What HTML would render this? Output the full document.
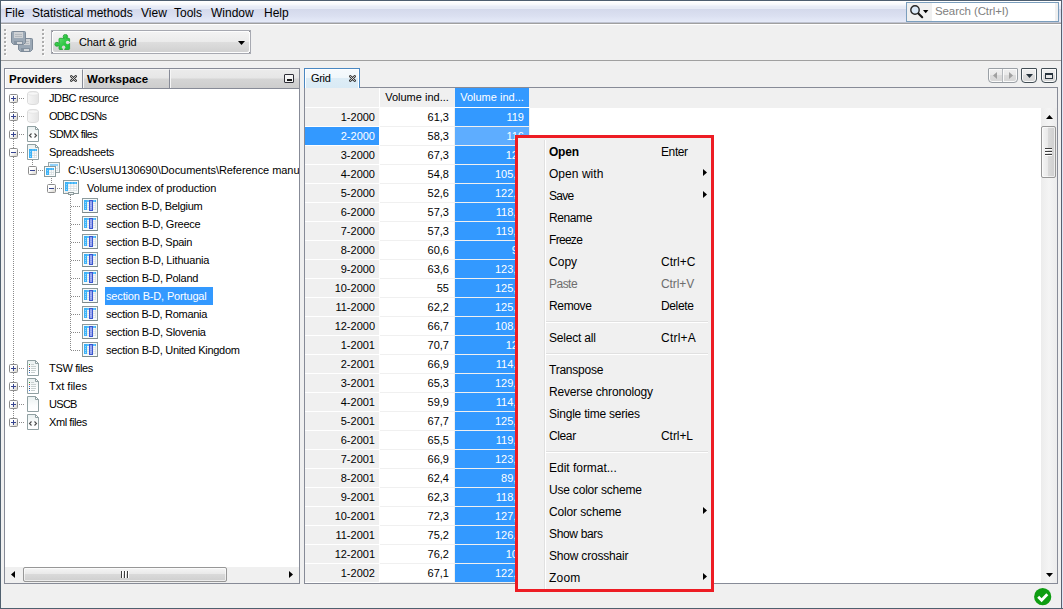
<!DOCTYPE html>
<html><head><meta charset="utf-8"><title>Chart &amp; grid</title>
<style>
*{box-sizing:border-box;margin:0;padding:0}
html,body{width:1063px;height:609px;overflow:hidden;background:#f0f0f0}
body{position:relative;font-family:"Liberation Sans",sans-serif;font-size:11px;color:#000}
.a{position:absolute}
.t{position:absolute;white-space:nowrap;line-height:1}
#frame-t{left:0;top:0;width:1063px;height:1px;background:#4e5e70}
#frame-l{left:0;top:0;width:1px;height:609px;background:#50606f}
#frame-l2{left:1px;top:1px;width:1px;height:607px;background:#8f9aa8}
#frame-r{left:1061px;top:0;width:1px;height:609px;background:#586070}
#frame-r2{left:1062px;top:0;width:1px;height:609px;background:#dfe4f3}
#frame-b{left:0;top:608px;width:1063px;height:1px;background:#50606f}
#frame-b2{display:none}
#menubar{left:1px;top:1px;width:1060px;height:22px;background:linear-gradient(#ffffff 0px,#ffffff 1px,#fdfdfe 1px,#fdfdfe 2px,#fafbfd 2px,#fafbfd 3px,#f7f8fc 3px,#f7f8fc 4px,#eff2fa 4px,#eff2fa 5px,#e9edf7 5px,#e9edf7 6px,#e7ebf6 6px,#e7ebf6 7px,#e7ebf6 7px,#e7ebf6 8px,#d4d9ec 8px,#d6dbed 10px,#dbe0f1 15px,#e2e7f6 19px,#e2e7f6 20px,#e4e9f7 20px,#e4e9f7 21px,#bfc3d1 21px,#bfc3d1 22px)}
#menuline{left:1px;top:23px;width:1060px;height:2px;background:linear-gradient(#a0a0a0 1px,#fff 1px)}
.m{font-size:12px;top:7px;color:#000}
#search{left:906px;top:2px;width:153px;height:20px;border:1px solid #7b9ebd;background:#fff}
#search .ic{left:0;top:0;width:25px;height:18px;background:#f0f0f0}
#search .rt{left:148px;top:0;width:3px;height:18px;background:#f0f0f0}
#tbline{left:1px;top:60px;width:1060px;height:1px;background:#a0a0a0}
#tbline2{left:1px;top:61px;width:1060px;height:1px;background:#fbfbfb}

#combo{left:51px;top:30px;width:200px;height:24px;border:1px solid #a7a9b1;background:#fdfdfd}
#combo .fill{left:1px;top:1px;width:196px;height:20px;border-radius:2px;background:linear-gradient(#f3f3f3 0,#ebebeb 10px,#dedede 10px,#d1d1d1 20px)}
#combo .cd{width:1px;height:1px;background:#8c8c90}
.panel{border:1px solid #8b8f96;background:#fff}
.tab{height:20px;border-right:1px solid #8b8f96}
.row{left:0;width:292px;height:18px}
.lbl{position:absolute;top:0;height:18px;line-height:18px;white-space:nowrap;padding:0 8px 0 1px;font-size:11px;letter-spacing:-0.25px}
.exp{position:absolute;width:9px;height:9px;border:1px solid #8c8c8c;border-radius:1.5px;background:linear-gradient(135deg,#fff 0,#fff 40%,#d6d3cb 100%)}
.exp:before{content:"";position:absolute;left:1px;top:3px;width:5px;height:1px;background:#36448f}
.exp.plus:after{content:"";position:absolute;left:3px;top:1px;width:1px;height:5px;background:#36448f}
.hd{border-top:0}
.vd{position:absolute;width:1px;background-image:linear-gradient(#8a8a8a 0,#8a8a8a 1px,transparent 1px);background-size:1px 2px}
.hdts{position:absolute;height:1px;background-image:linear-gradient(90deg,#8a8a8a 0,#8a8a8a 1px,transparent 1px);background-size:2px 1px}
.gc{position:absolute;height:18px;line-height:18px;font-size:11px;text-align:right;white-space:nowrap;overflow:hidden}
.mi{position:absolute;left:549px;letter-spacing:-0.15px;font-size:12px;line-height:22px;height:22px;white-space:nowrap}
.acc{position:absolute;left:661px;letter-spacing:-0.15px;font-size:12px;line-height:22px;height:22px;white-space:nowrap}
.arr{position:absolute;left:703px;width:0;height:0;border-left:4px solid #000;border-top:4px solid transparent;border-bottom:4px solid transparent}
.sep{position:absolute;left:546px;width:162px;height:2px;border-top:1px solid #e0e0e0;border-bottom:1px solid #fff}
</style></head><body>

<div class="a" id="menubar"></div><div class="a" id="menuline"></div>
<div class="t m" style="left:5px">File</div>
<div class="t m" style="left:32px">Statistical methods</div>
<div class="t m" style="left:141px">View</div>
<div class="t m" style="left:174px">Tools</div>
<div class="t m" style="left:211px">Window</div>
<div class="t m" style="left:264px">Help</div>
<div class="a" id="search"><div class="a ic"></div><div class="a rt"></div><svg class="a" style="left:2px;top:1px" width="22" height="16" viewBox="0 0 22 16"><circle cx="6" cy="6" r="4.200" fill="#dbe9f7" stroke="#262626" stroke-width="1.400"/><path d="M9.400 9.400 L13.200 13.200" stroke="#1a1a1a" stroke-width="2.100" stroke-linecap="round"/><path d="M14 6 h5.400 l-2.700 3.200z" fill="#000"/></svg><div class="t" style="left:28px;top:3px;font-size:11.500px;letter-spacing:-0.1px;color:#7f7f7f">Search (Ctrl+I)</div></div>
<div class="a" id="tbline"></div>
<svg class="a" style="left:4px;top:29px" width="3" height="28" viewBox="0 0 3 28"><rect x="1" y="1" width="2" height="2" fill="#fbfbfb"/><rect x="0" y="0" width="2" height="2" fill="#acacac"/><rect x="1" y="5" width="2" height="2" fill="#fbfbfb"/><rect x="0" y="4" width="2" height="2" fill="#acacac"/><rect x="1" y="9" width="2" height="2" fill="#fbfbfb"/><rect x="0" y="8" width="2" height="2" fill="#acacac"/><rect x="1" y="13" width="2" height="2" fill="#fbfbfb"/><rect x="0" y="12" width="2" height="2" fill="#acacac"/><rect x="1" y="17" width="2" height="2" fill="#fbfbfb"/><rect x="0" y="16" width="2" height="2" fill="#acacac"/><rect x="1" y="21" width="2" height="2" fill="#fbfbfb"/><rect x="0" y="20" width="2" height="2" fill="#acacac"/><rect x="1" y="25" width="2" height="2" fill="#fbfbfb"/><rect x="0" y="24" width="2" height="2" fill="#acacac"/></svg>
<svg class="a" style="left:42px;top:29px" width="3" height="28" viewBox="0 0 3 28"><rect x="1" y="1" width="2" height="2" fill="#fbfbfb"/><rect x="0" y="0" width="2" height="2" fill="#acacac"/><rect x="1" y="5" width="2" height="2" fill="#fbfbfb"/><rect x="0" y="4" width="2" height="2" fill="#acacac"/><rect x="1" y="9" width="2" height="2" fill="#fbfbfb"/><rect x="0" y="8" width="2" height="2" fill="#acacac"/><rect x="1" y="13" width="2" height="2" fill="#fbfbfb"/><rect x="0" y="12" width="2" height="2" fill="#acacac"/><rect x="1" y="17" width="2" height="2" fill="#fbfbfb"/><rect x="0" y="16" width="2" height="2" fill="#acacac"/><rect x="1" y="21" width="2" height="2" fill="#fbfbfb"/><rect x="0" y="20" width="2" height="2" fill="#acacac"/><rect x="1" y="25" width="2" height="2" fill="#fbfbfb"/><rect x="0" y="24" width="2" height="2" fill="#acacac"/></svg>
<svg class="a" style="left:11px;top:31px" width="22" height="21" viewBox="0 0 22 21"><g transform="translate(7,7)"><path d="M1.500 .5 H13.500 Q14.500 .5 14.500 1.500 V11.500 L12.500 13.500 H2.500 L.5 11.500 V1.500 Q.5 .5 1.500 .5Z" fill="#9ba8b5" stroke="#7d8a98"/><rect x="3" y="1" width="9" height="6" fill="#cfd2d5"/><path d="M4 3.500h7M4 5.500h7" stroke="#b4b9be"/><rect x="3" y="10" width="9" height="3" fill="#8593a1"/><rect x="6" y="11" width="5" height="2" fill="#d4d7da"/></g><g><path d="M1.500 .5 H13.500 Q14.500 .5 14.500 1.500 V11.500 L12.500 13.500 H2.500 L.5 11.500 V1.500 Q.5 .5 1.500 .5Z" fill="#9ba8b5" stroke="#7d8a98"/><rect x="3" y="1" width="9" height="6" fill="#cfd2d5"/><path d="M4 3.500h7M4 5.500h7" stroke="#b4b9be"/><rect x="3" y="10" width="9" height="3" fill="#8593a1"/><rect x="6" y="11" width="5" height="2" fill="#d4d7da"/></g></svg>
<div class="a" id="combo"><div class="a fill"></div><div class="a cd" style="left:0;top:0"></div><div class="a cd" style="left:197px;top:0"></div><div class="a cd" style="left:0;top:21px"></div><div class="a cd" style="left:197px;top:21px"></div><svg class="a" style="left:2px;top:3px" width="17" height="17" viewBox="0 0 17 17"><defs><linearGradient id="gpz" x1="0" y1="0" x2="1" y2="1"><stop offset="0" stop-color="#5ddc6c"/><stop offset=".5" stop-color="#2fc744"/><stop offset="1" stop-color="#1fc038"/></linearGradient><mask id="mpz"><rect width="17" height="17" fill="#fff"/><circle cx="13.600" cy="8.500" r="1.700" fill="#000"/><rect x="14.500" y="7.800" width="3" height="1.400" fill="#000"/><circle cx="9.600" cy="13.200" r="1.700" fill="#000"/><rect x="8.900" y="14" width="1.400" height="3" fill="#000"/></mask></defs><g mask="url(#mpz)" fill="url(#gpz)" stroke="#1f9e30" stroke-width=".8"><circle cx="11.400" cy="2.600" r="2.200"/><circle cx="2.900" cy="10.300" r="2"/><rect x="5" y="4.300" width="10.600" height="11.200" rx=".8"/></g><g mask="url(#mpz)" fill="#35ca49"><rect x="10.400" y="3.500" width="2" height="2.500"/><rect x="3.500" y="9.400" width="3" height="1.900"/></g></svg><div class="t" style="left:27px;top:6px;font-size:11px;letter-spacing:-0.1px">Chart &amp; grid</div><svg class="a" style="left:186px;top:10px" width="7" height="4" viewBox="0 0 7 4"><path d="M0 0 H7 L3.500 4Z" fill="#000"/></svg></div>
<div class="a" style="left:4px;top:68px;width:296px;height:516px;border:1px solid #878b97;background:#fff"></div>
<div class="a" style="left:5px;top:69px;width:294px;height:19px;background:linear-gradient(#ececec 0,#e6e6e6 9px,#d5d5d5 10px,#cdcdcd 19px)"></div>
<div class="a" style="left:5px;top:69px;width:78px;height:19px;background:#f3f3f3;border:1px solid #fff;border-right:1px solid #878b97;border-bottom:0"></div>
<div class="a" style="left:83px;top:69px;width:87px;height:19px;border-left:1px solid #f6f6f6;border-top:1px solid #f4f4f4;border-right:1px solid #878b97"></div>
<div class="a" style="left:170px;top:69px;width:129px;height:19px;border-left:1px solid #f6f6f6;border-top:1px solid #f4f4f4"></div>
<div class="a" style="left:5px;top:88px;width:294px;height:1px;background:#878b97"></div>
<div class="t" style="left:9px;top:74px;font-size:11.5px;font-weight:bold">Providers</div>
<div class="t" style="left:87px;top:74px;font-size:11.5px;font-weight:bold">Workspace</div>
<svg class="a" style="left:70px;top:75px" width="7" height="7" viewBox="0 0 7 7"><path d="M1.300 1.300 L5.700 5.700 M5.700 1.300 L1.300 5.700" stroke="#3a3a3a" stroke-width="2.500" stroke-linecap="round"/><path d="M1.400 1.400 L5.600 5.600 M5.600 1.400 L1.400 5.600" stroke="#e0e0e0" stroke-width=".9" stroke-linecap="round"/></svg>
<div class="a" style="left:284px;top:74px;width:10px;height:9px;border:1px solid #2e2e36;border-radius:1px;background:#f4f4f4"><div class="a" style="left:2px;top:4px;width:5px;height:2px;background:#1a1a1a"></div></div>
<div class="a" style="left:6px;top:89px;width:293px;height:476px;overflow:hidden">
<div class="vd" style="left:7px;top:14px;height:316px"></div>
<div class="vd" style="left:26px;top:71px;height:6px"></div>
<div class="vd" style="left:45px;top:89px;height:6px"></div>
<div class="vd" style="left:64px;top:106px;height:156px"></div>
<div class="a row" style="top:0px">
<div class="exp plus" style="left:3px;top:5px"></div><div class="hdts" style="left:13px;top:9px;width:6px"></div>
<div class="a" style="left:21px;top:2px;line-height:0"><svg width="12" height="14" viewBox="0 0 12 14"><defs><linearGradient id="gdb" x1="0" x2="1"><stop offset="0" stop-color="#f6f6f6"/><stop offset="1" stop-color="#e4e4e4"/></linearGradient></defs><path d="M.5 2.500 C.5 -.2 11.500 -.2 11.500 2.500 V11.500 C11.500 14.200 .5 14.200 .5 11.500 Z" fill="url(#gdb)" stroke="#dcdcdc"/><ellipse cx="6" cy="2.600" rx="5" ry="1.700" fill="#f7f7f7" stroke="#e3e3e3" stroke-width=".7"/></svg></div>
<div class="lbl" style="left:42px;letter-spacing:0;"><span style="letter-spacing:-0.40px">JDBC resource</span></div></div>
<div class="a row" style="top:18px">
<div class="exp plus" style="left:3px;top:5px"></div><div class="hdts" style="left:13px;top:9px;width:6px"></div>
<div class="a" style="left:21px;top:2px;line-height:0"><svg width="12" height="14" viewBox="0 0 12 14"><defs><linearGradient id="gdb" x1="0" x2="1"><stop offset="0" stop-color="#f6f6f6"/><stop offset="1" stop-color="#e4e4e4"/></linearGradient></defs><path d="M.5 2.500 C.5 -.2 11.500 -.2 11.500 2.500 V11.500 C11.500 14.200 .5 14.200 .5 11.500 Z" fill="url(#gdb)" stroke="#dcdcdc"/><ellipse cx="6" cy="2.600" rx="5" ry="1.700" fill="#f7f7f7" stroke="#e3e3e3" stroke-width=".7"/></svg></div>
<div class="lbl" style="left:42px;letter-spacing:0;"><span style="letter-spacing:-0.70px">ODBC DSNs</span></div></div>
<div class="a row" style="top:36px">
<div class="exp plus" style="left:3px;top:5px"></div><div class="hdts" style="left:13px;top:9px;width:6px"></div>
<div class="a" style="left:21px;top:1px;line-height:0"><svg width="12" height="16" viewBox="0 0 12 16"><defs><linearGradient id="gdoc" x1="0" y1="0" x2="0" y2="1"><stop offset="0" stop-color="#e9f0f0"/><stop offset=".6" stop-color="#fbfdfd"/><stop offset="1" stop-color="#fff"/></linearGradient></defs><path d="M.5 .5 H8.500 L11.500 3.500 V15.500 H.5 Z" fill="url(#gdoc)" stroke="#90a0a2"/><path d="M8.500 .5 V3.500 H11.500 Z" fill="#fff" stroke="#90a0a2" stroke-linejoin="round"/><path d="M4.500 7.500 L2.500 9.500 L4.500 11.500 M7.500 7.500 L9.500 9.500 L7.500 11.500" fill="none" stroke="#4a4a4a" stroke-width="1.100"/></svg></div>
<div class="lbl" style="left:42px;letter-spacing:0;"><span style="letter-spacing:-0.62px">SDMX files</span></div></div>
<div class="a row" style="top:54px">
<div class="exp minus" style="left:3px;top:5px"></div><div class="hdts" style="left:13px;top:9px;width:6px"></div>
<div class="a" style="left:21px;top:1px;line-height:0"><svg width="12" height="16" viewBox="0 0 12 16"><defs><linearGradient id="gdoc" x1="0" y1="0" x2="0" y2="1"><stop offset="0" stop-color="#e9f0f0"/><stop offset=".6" stop-color="#fbfdfd"/><stop offset="1" stop-color="#fff"/></linearGradient></defs><path d="M.5 .5 H8.500 L11.500 3.500 V15.500 H.5 Z" fill="url(#gdoc)" stroke="#90a0a2"/><path d="M8.500 .5 V3.500 H11.500 Z" fill="#fff" stroke="#90a0a2" stroke-linejoin="round"/><rect x="2" y="5" width="8" height="9" fill="#d3dcdf"/><rect x="2" y="5" width="8" height="2" fill="#3bb2f7"/><rect x="2" y="5" width="3" height="9" fill="#3bb2f7"/><rect x="5.20" y="7.20" width="1.70" height="1.53" fill="#fff"/><rect x="7.70" y="7.20" width="1.70" height="1.53" fill="#fff"/><rect x="5.20" y="9.53" width="1.70" height="1.53" fill="#fff"/><rect x="7.70" y="9.53" width="1.70" height="1.53" fill="#fff"/><rect x="5.20" y="11.87" width="1.70" height="1.53" fill="#fff"/><rect x="7.70" y="11.87" width="1.70" height="1.53" fill="#fff"/><rect x="5.40" y="5.6" width="1.10" height="0.8" fill="#a6dcfc"/><rect x="7.90" y="5.6" width="1.10" height="0.8" fill="#a6dcfc"/><rect x="3" y="7.30" width="1" height="0.8" fill="#b8e4fd"/><rect x="3" y="9.63" width="1" height="0.8" fill="#b8e4fd"/><rect x="3" y="11.97" width="1" height="0.8" fill="#b8e4fd"/></svg></div>
<div class="lbl" style="left:42px;letter-spacing:0;"><span style="letter-spacing:-0.24px">Spreadsheets</span></div></div>
<div class="a row" style="top:72px">
<div class="exp minus" style="left:22px;top:5px"></div><div class="hdts" style="left:32px;top:9px;width:6px"></div>
<div class="a" style="left:38px;top:1px;line-height:0"><svg width="16" height="15" viewBox="0 0 16 15"><rect x="4.500" y=".5" width="11" height="10" fill="#f2f7f8" stroke="#9aa8aa"/><rect x="6" y="2" width="8" height="7" fill="#d3dcdf"/><rect x="6" y="2" width="8" height="2" fill="#8fd0f8"/><rect x="6" y="2" width="3" height="7" fill="#8fd0f8"/><rect x="9.20" y="4.20" width="1.70" height="1.70" fill="#fff"/><rect x="11.70" y="4.20" width="1.70" height="1.70" fill="#fff"/><rect x="9.20" y="6.70" width="1.70" height="1.70" fill="#fff"/><rect x="11.70" y="6.70" width="1.70" height="1.70" fill="#fff"/><rect x="9.40" y="2.6" width="1.10" height="0.8" fill="#a6dcfc"/><rect x="11.90" y="2.6" width="1.10" height="0.8" fill="#a6dcfc"/><rect x="7" y="4.30" width="1" height="0.8" fill="#b8e4fd"/><rect x="7" y="6.80" width="1" height="0.8" fill="#b8e4fd"/><rect x=".5" y="4.500" width="11" height="10" fill="#fafcfc" stroke="#8a9a9c"/><rect x="2" y="6" width="8" height="7" fill="#d3dcdf"/><rect x="2" y="6" width="8" height="2" fill="#3bb2f7"/><rect x="2" y="6" width="3" height="7" fill="#3bb2f7"/><rect x="5.20" y="8.20" width="1.70" height="1.70" fill="#fff"/><rect x="7.70" y="8.20" width="1.70" height="1.70" fill="#fff"/><rect x="5.20" y="10.70" width="1.70" height="1.70" fill="#fff"/><rect x="7.70" y="10.70" width="1.70" height="1.70" fill="#fff"/><rect x="5.40" y="6.6" width="1.10" height="0.8" fill="#a6dcfc"/><rect x="7.90" y="6.6" width="1.10" height="0.8" fill="#a6dcfc"/><rect x="3" y="8.30" width="1" height="0.8" fill="#b8e4fd"/><rect x="3" y="10.80" width="1" height="0.8" fill="#b8e4fd"/></svg></div>
<div class="lbl" style="left:61px;letter-spacing:-0.05px;">C:\Users\U130690\Documents\Reference manual</div></div>
<div class="a row" style="top:90px">
<div class="exp minus" style="left:41px;top:5px"></div><div class="hdts" style="left:51px;top:9px;width:6px"></div>
<div class="a" style="left:57px;top:1px;line-height:0"><svg width="16" height="15" viewBox="0 0 16 15"><rect x=".5" y=".5" width="15" height="13" fill="#f7fafa" stroke="#8c9a9c"/><rect x="2" y="2" width="12" height="9" fill="#d3dcdf"/><rect x="2" y="2" width="12" height="2" fill="#3bb2f7"/><rect x="2" y="2" width="3" height="9" fill="#3bb2f7"/><rect x="5.20" y="4.20" width="2.20" height="1.53" fill="#fff"/><rect x="8.20" y="4.20" width="2.20" height="1.53" fill="#fff"/><rect x="11.20" y="4.20" width="2.20" height="1.53" fill="#fff"/><rect x="5.20" y="6.53" width="2.20" height="1.53" fill="#fff"/><rect x="8.20" y="6.53" width="2.20" height="1.53" fill="#fff"/><rect x="11.20" y="6.53" width="2.20" height="1.53" fill="#fff"/><rect x="5.20" y="8.87" width="2.20" height="1.53" fill="#fff"/><rect x="8.20" y="8.87" width="2.20" height="1.53" fill="#fff"/><rect x="11.20" y="8.87" width="2.20" height="1.53" fill="#fff"/><rect x="5.40" y="2.6" width="1.60" height="0.8" fill="#a6dcfc"/><rect x="8.40" y="2.6" width="1.60" height="0.8" fill="#a6dcfc"/><rect x="11.40" y="2.6" width="1.60" height="0.8" fill="#a6dcfc"/><rect x="3" y="4.30" width="1" height="0.8" fill="#b8e4fd"/><rect x="3" y="6.63" width="1" height="0.8" fill="#b8e4fd"/><rect x="3" y="8.97" width="1" height="0.8" fill="#b8e4fd"/><rect x="2" y="11.500" width="3" height="1" fill="#d5dcdc"/><rect x="5.500" y="12.500" width="5" height="2" fill="#eef2f2" stroke="#8c9a9c"/></svg></div>
<div class="lbl" style="left:80px;letter-spacing:0;"><span style="letter-spacing:-0.13px">Volume index of production</span></div></div>
<div class="a row" style="top:108px">
<div class="hdts" style="left:65px;top:9px;width:9px"></div>
<div class="a" style="left:76px;top:1px;line-height:0"><svg width="16" height="15" viewBox="0 0 16 15"><rect x=".5" y=".5" width="15" height="14" fill="#f5fafb" stroke="#8c9a9c"/><path d="M.5 14.500h15" stroke="#7c8a8c"/><rect x="2" y="2" width="12" height="10" fill="#d3dcdf"/><rect x="2" y="2" width="12" height="2" fill="#3bb2f7"/><rect x="2" y="2" width="3" height="10" fill="#3bb2f7"/><rect x="5.20" y="4.20" width="2.20" height="1.20" fill="#fff"/><rect x="8.20" y="4.20" width="2.20" height="1.20" fill="#fff"/><rect x="11.20" y="4.20" width="2.20" height="1.20" fill="#fff"/><rect x="5.20" y="6.20" width="2.20" height="1.20" fill="#fff"/><rect x="8.20" y="6.20" width="2.20" height="1.20" fill="#fff"/><rect x="11.20" y="6.20" width="2.20" height="1.20" fill="#fff"/><rect x="5.20" y="8.20" width="2.20" height="1.20" fill="#fff"/><rect x="8.20" y="8.20" width="2.20" height="1.20" fill="#fff"/><rect x="11.20" y="8.20" width="2.20" height="1.20" fill="#fff"/><rect x="5.20" y="10.20" width="2.20" height="1.20" fill="#fff"/><rect x="8.20" y="10.20" width="2.20" height="1.20" fill="#fff"/><rect x="11.20" y="10.20" width="2.20" height="1.20" fill="#fff"/><rect x="5.40" y="2.6" width="1.60" height="0.8" fill="#a6dcfc"/><rect x="8.40" y="2.6" width="1.60" height="0.8" fill="#a6dcfc"/><rect x="11.40" y="2.6" width="1.60" height="0.8" fill="#a6dcfc"/><rect x="3" y="4.30" width="1" height="0.8" fill="#b8e4fd"/><rect x="3" y="6.30" width="1" height="0.8" fill="#b8e4fd"/><rect x="3" y="8.30" width="1" height="0.8" fill="#b8e4fd"/><rect x="3" y="10.30" width="1" height="0.8" fill="#b8e4fd"/><rect x="7.500" y="2.500" width="3" height="10" fill="#8c9cec" stroke="#3b55d0"/><path d="M9 4.500v7" stroke="#c4ccf6" stroke-width="1" stroke-dasharray="1.300 0.900"/></svg></div>
<div class="lbl" style="left:99px;letter-spacing:0;"><span style="letter-spacing:-0.32px">section B-D, Belgium</span></div></div>
<div class="a row" style="top:126px">
<div class="hdts" style="left:65px;top:9px;width:9px"></div>
<div class="a" style="left:76px;top:1px;line-height:0"><svg width="16" height="15" viewBox="0 0 16 15"><rect x=".5" y=".5" width="15" height="14" fill="#f5fafb" stroke="#8c9a9c"/><path d="M.5 14.500h15" stroke="#7c8a8c"/><rect x="2" y="2" width="12" height="10" fill="#d3dcdf"/><rect x="2" y="2" width="12" height="2" fill="#3bb2f7"/><rect x="2" y="2" width="3" height="10" fill="#3bb2f7"/><rect x="5.20" y="4.20" width="2.20" height="1.20" fill="#fff"/><rect x="8.20" y="4.20" width="2.20" height="1.20" fill="#fff"/><rect x="11.20" y="4.20" width="2.20" height="1.20" fill="#fff"/><rect x="5.20" y="6.20" width="2.20" height="1.20" fill="#fff"/><rect x="8.20" y="6.20" width="2.20" height="1.20" fill="#fff"/><rect x="11.20" y="6.20" width="2.20" height="1.20" fill="#fff"/><rect x="5.20" y="8.20" width="2.20" height="1.20" fill="#fff"/><rect x="8.20" y="8.20" width="2.20" height="1.20" fill="#fff"/><rect x="11.20" y="8.20" width="2.20" height="1.20" fill="#fff"/><rect x="5.20" y="10.20" width="2.20" height="1.20" fill="#fff"/><rect x="8.20" y="10.20" width="2.20" height="1.20" fill="#fff"/><rect x="11.20" y="10.20" width="2.20" height="1.20" fill="#fff"/><rect x="5.40" y="2.6" width="1.60" height="0.8" fill="#a6dcfc"/><rect x="8.40" y="2.6" width="1.60" height="0.8" fill="#a6dcfc"/><rect x="11.40" y="2.6" width="1.60" height="0.8" fill="#a6dcfc"/><rect x="3" y="4.30" width="1" height="0.8" fill="#b8e4fd"/><rect x="3" y="6.30" width="1" height="0.8" fill="#b8e4fd"/><rect x="3" y="8.30" width="1" height="0.8" fill="#b8e4fd"/><rect x="3" y="10.30" width="1" height="0.8" fill="#b8e4fd"/><rect x="7.500" y="2.500" width="3" height="10" fill="#8c9cec" stroke="#3b55d0"/><path d="M9 4.500v7" stroke="#c4ccf6" stroke-width="1" stroke-dasharray="1.300 0.900"/></svg></div>
<div class="lbl" style="left:99px;letter-spacing:0;"><span style="letter-spacing:-0.24px">section B-D, Greece</span></div></div>
<div class="a row" style="top:144px">
<div class="hdts" style="left:65px;top:9px;width:9px"></div>
<div class="a" style="left:76px;top:1px;line-height:0"><svg width="16" height="15" viewBox="0 0 16 15"><rect x=".5" y=".5" width="15" height="14" fill="#f5fafb" stroke="#8c9a9c"/><path d="M.5 14.500h15" stroke="#7c8a8c"/><rect x="2" y="2" width="12" height="10" fill="#d3dcdf"/><rect x="2" y="2" width="12" height="2" fill="#3bb2f7"/><rect x="2" y="2" width="3" height="10" fill="#3bb2f7"/><rect x="5.20" y="4.20" width="2.20" height="1.20" fill="#fff"/><rect x="8.20" y="4.20" width="2.20" height="1.20" fill="#fff"/><rect x="11.20" y="4.20" width="2.20" height="1.20" fill="#fff"/><rect x="5.20" y="6.20" width="2.20" height="1.20" fill="#fff"/><rect x="8.20" y="6.20" width="2.20" height="1.20" fill="#fff"/><rect x="11.20" y="6.20" width="2.20" height="1.20" fill="#fff"/><rect x="5.20" y="8.20" width="2.20" height="1.20" fill="#fff"/><rect x="8.20" y="8.20" width="2.20" height="1.20" fill="#fff"/><rect x="11.20" y="8.20" width="2.20" height="1.20" fill="#fff"/><rect x="5.20" y="10.20" width="2.20" height="1.20" fill="#fff"/><rect x="8.20" y="10.20" width="2.20" height="1.20" fill="#fff"/><rect x="11.20" y="10.20" width="2.20" height="1.20" fill="#fff"/><rect x="5.40" y="2.6" width="1.60" height="0.8" fill="#a6dcfc"/><rect x="8.40" y="2.6" width="1.60" height="0.8" fill="#a6dcfc"/><rect x="11.40" y="2.6" width="1.60" height="0.8" fill="#a6dcfc"/><rect x="3" y="4.30" width="1" height="0.8" fill="#b8e4fd"/><rect x="3" y="6.30" width="1" height="0.8" fill="#b8e4fd"/><rect x="3" y="8.30" width="1" height="0.8" fill="#b8e4fd"/><rect x="3" y="10.30" width="1" height="0.8" fill="#b8e4fd"/><rect x="7.500" y="2.500" width="3" height="10" fill="#8c9cec" stroke="#3b55d0"/><path d="M9 4.500v7" stroke="#c4ccf6" stroke-width="1" stroke-dasharray="1.300 0.900"/></svg></div>
<div class="lbl" style="left:99px;letter-spacing:0;"><span style="letter-spacing:-0.28px">section B-D, Spain</span></div></div>
<div class="a row" style="top:162px">
<div class="hdts" style="left:65px;top:9px;width:9px"></div>
<div class="a" style="left:76px;top:1px;line-height:0"><svg width="16" height="15" viewBox="0 0 16 15"><rect x=".5" y=".5" width="15" height="14" fill="#f5fafb" stroke="#8c9a9c"/><path d="M.5 14.500h15" stroke="#7c8a8c"/><rect x="2" y="2" width="12" height="10" fill="#d3dcdf"/><rect x="2" y="2" width="12" height="2" fill="#3bb2f7"/><rect x="2" y="2" width="3" height="10" fill="#3bb2f7"/><rect x="5.20" y="4.20" width="2.20" height="1.20" fill="#fff"/><rect x="8.20" y="4.20" width="2.20" height="1.20" fill="#fff"/><rect x="11.20" y="4.20" width="2.20" height="1.20" fill="#fff"/><rect x="5.20" y="6.20" width="2.20" height="1.20" fill="#fff"/><rect x="8.20" y="6.20" width="2.20" height="1.20" fill="#fff"/><rect x="11.20" y="6.20" width="2.20" height="1.20" fill="#fff"/><rect x="5.20" y="8.20" width="2.20" height="1.20" fill="#fff"/><rect x="8.20" y="8.20" width="2.20" height="1.20" fill="#fff"/><rect x="11.20" y="8.20" width="2.20" height="1.20" fill="#fff"/><rect x="5.20" y="10.20" width="2.20" height="1.20" fill="#fff"/><rect x="8.20" y="10.20" width="2.20" height="1.20" fill="#fff"/><rect x="11.20" y="10.20" width="2.20" height="1.20" fill="#fff"/><rect x="5.40" y="2.6" width="1.60" height="0.8" fill="#a6dcfc"/><rect x="8.40" y="2.6" width="1.60" height="0.8" fill="#a6dcfc"/><rect x="11.40" y="2.6" width="1.60" height="0.8" fill="#a6dcfc"/><rect x="3" y="4.30" width="1" height="0.8" fill="#b8e4fd"/><rect x="3" y="6.30" width="1" height="0.8" fill="#b8e4fd"/><rect x="3" y="8.30" width="1" height="0.8" fill="#b8e4fd"/><rect x="3" y="10.30" width="1" height="0.8" fill="#b8e4fd"/><rect x="7.500" y="2.500" width="3" height="10" fill="#8c9cec" stroke="#3b55d0"/><path d="M9 4.500v7" stroke="#c4ccf6" stroke-width="1" stroke-dasharray="1.300 0.900"/></svg></div>
<div class="lbl" style="left:99px;letter-spacing:0;"><span style="letter-spacing:-0.20px">section B-D, Lithuania</span></div></div>
<div class="a row" style="top:180px">
<div class="hdts" style="left:65px;top:9px;width:9px"></div>
<div class="a" style="left:76px;top:1px;line-height:0"><svg width="16" height="15" viewBox="0 0 16 15"><rect x=".5" y=".5" width="15" height="14" fill="#f5fafb" stroke="#8c9a9c"/><path d="M.5 14.500h15" stroke="#7c8a8c"/><rect x="2" y="2" width="12" height="10" fill="#d3dcdf"/><rect x="2" y="2" width="12" height="2" fill="#3bb2f7"/><rect x="2" y="2" width="3" height="10" fill="#3bb2f7"/><rect x="5.20" y="4.20" width="2.20" height="1.20" fill="#fff"/><rect x="8.20" y="4.20" width="2.20" height="1.20" fill="#fff"/><rect x="11.20" y="4.20" width="2.20" height="1.20" fill="#fff"/><rect x="5.20" y="6.20" width="2.20" height="1.20" fill="#fff"/><rect x="8.20" y="6.20" width="2.20" height="1.20" fill="#fff"/><rect x="11.20" y="6.20" width="2.20" height="1.20" fill="#fff"/><rect x="5.20" y="8.20" width="2.20" height="1.20" fill="#fff"/><rect x="8.20" y="8.20" width="2.20" height="1.20" fill="#fff"/><rect x="11.20" y="8.20" width="2.20" height="1.20" fill="#fff"/><rect x="5.20" y="10.20" width="2.20" height="1.20" fill="#fff"/><rect x="8.20" y="10.20" width="2.20" height="1.20" fill="#fff"/><rect x="11.20" y="10.20" width="2.20" height="1.20" fill="#fff"/><rect x="5.40" y="2.6" width="1.60" height="0.8" fill="#a6dcfc"/><rect x="8.40" y="2.6" width="1.60" height="0.8" fill="#a6dcfc"/><rect x="11.40" y="2.6" width="1.60" height="0.8" fill="#a6dcfc"/><rect x="3" y="4.30" width="1" height="0.8" fill="#b8e4fd"/><rect x="3" y="6.30" width="1" height="0.8" fill="#b8e4fd"/><rect x="3" y="8.30" width="1" height="0.8" fill="#b8e4fd"/><rect x="3" y="10.30" width="1" height="0.8" fill="#b8e4fd"/><rect x="7.500" y="2.500" width="3" height="10" fill="#8c9cec" stroke="#3b55d0"/><path d="M9 4.500v7" stroke="#c4ccf6" stroke-width="1" stroke-dasharray="1.300 0.900"/></svg></div>
<div class="lbl" style="left:99px;letter-spacing:0;"><span style="letter-spacing:-0.27px">section B-D, Poland</span></div></div>
<div class="a row" style="top:198px">
<div class="hdts" style="left:65px;top:9px;width:9px"></div>
<div class="a" style="left:76px;top:1px;line-height:0"><svg width="16" height="15" viewBox="0 0 16 15"><rect x=".5" y=".5" width="15" height="14" fill="#f5fafb" stroke="#8c9a9c"/><path d="M.5 14.500h15" stroke="#7c8a8c"/><rect x="2" y="2" width="12" height="10" fill="#d3dcdf"/><rect x="2" y="2" width="12" height="2" fill="#3bb2f7"/><rect x="2" y="2" width="3" height="10" fill="#3bb2f7"/><rect x="5.20" y="4.20" width="2.20" height="1.20" fill="#fff"/><rect x="8.20" y="4.20" width="2.20" height="1.20" fill="#fff"/><rect x="11.20" y="4.20" width="2.20" height="1.20" fill="#fff"/><rect x="5.20" y="6.20" width="2.20" height="1.20" fill="#fff"/><rect x="8.20" y="6.20" width="2.20" height="1.20" fill="#fff"/><rect x="11.20" y="6.20" width="2.20" height="1.20" fill="#fff"/><rect x="5.20" y="8.20" width="2.20" height="1.20" fill="#fff"/><rect x="8.20" y="8.20" width="2.20" height="1.20" fill="#fff"/><rect x="11.20" y="8.20" width="2.20" height="1.20" fill="#fff"/><rect x="5.20" y="10.20" width="2.20" height="1.20" fill="#fff"/><rect x="8.20" y="10.20" width="2.20" height="1.20" fill="#fff"/><rect x="11.20" y="10.20" width="2.20" height="1.20" fill="#fff"/><rect x="5.40" y="2.6" width="1.60" height="0.8" fill="#a6dcfc"/><rect x="8.40" y="2.6" width="1.60" height="0.8" fill="#a6dcfc"/><rect x="11.40" y="2.6" width="1.60" height="0.8" fill="#a6dcfc"/><rect x="3" y="4.30" width="1" height="0.8" fill="#b8e4fd"/><rect x="3" y="6.30" width="1" height="0.8" fill="#b8e4fd"/><rect x="3" y="8.30" width="1" height="0.8" fill="#b8e4fd"/><rect x="3" y="10.30" width="1" height="0.8" fill="#b8e4fd"/><rect x="7.500" y="2.500" width="3" height="10" fill="#8c9cec" stroke="#3b55d0"/><path d="M9 4.500v7" stroke="#c4ccf6" stroke-width="1" stroke-dasharray="1.300 0.900"/></svg></div>
<div class="lbl" style="left:99px;letter-spacing:0;width:108px;background:#3399ff;color:#fff;"><span style="letter-spacing:-0.16px">section B-D, Portugal</span></div></div>
<div class="a row" style="top:216px">
<div class="hdts" style="left:65px;top:9px;width:9px"></div>
<div class="a" style="left:76px;top:1px;line-height:0"><svg width="16" height="15" viewBox="0 0 16 15"><rect x=".5" y=".5" width="15" height="14" fill="#f5fafb" stroke="#8c9a9c"/><path d="M.5 14.500h15" stroke="#7c8a8c"/><rect x="2" y="2" width="12" height="10" fill="#d3dcdf"/><rect x="2" y="2" width="12" height="2" fill="#3bb2f7"/><rect x="2" y="2" width="3" height="10" fill="#3bb2f7"/><rect x="5.20" y="4.20" width="2.20" height="1.20" fill="#fff"/><rect x="8.20" y="4.20" width="2.20" height="1.20" fill="#fff"/><rect x="11.20" y="4.20" width="2.20" height="1.20" fill="#fff"/><rect x="5.20" y="6.20" width="2.20" height="1.20" fill="#fff"/><rect x="8.20" y="6.20" width="2.20" height="1.20" fill="#fff"/><rect x="11.20" y="6.20" width="2.20" height="1.20" fill="#fff"/><rect x="5.20" y="8.20" width="2.20" height="1.20" fill="#fff"/><rect x="8.20" y="8.20" width="2.20" height="1.20" fill="#fff"/><rect x="11.20" y="8.20" width="2.20" height="1.20" fill="#fff"/><rect x="5.20" y="10.20" width="2.20" height="1.20" fill="#fff"/><rect x="8.20" y="10.20" width="2.20" height="1.20" fill="#fff"/><rect x="11.20" y="10.20" width="2.20" height="1.20" fill="#fff"/><rect x="5.40" y="2.6" width="1.60" height="0.8" fill="#a6dcfc"/><rect x="8.40" y="2.6" width="1.60" height="0.8" fill="#a6dcfc"/><rect x="11.40" y="2.6" width="1.60" height="0.8" fill="#a6dcfc"/><rect x="3" y="4.30" width="1" height="0.8" fill="#b8e4fd"/><rect x="3" y="6.30" width="1" height="0.8" fill="#b8e4fd"/><rect x="3" y="8.30" width="1" height="0.8" fill="#b8e4fd"/><rect x="3" y="10.30" width="1" height="0.8" fill="#b8e4fd"/><rect x="7.500" y="2.500" width="3" height="10" fill="#8c9cec" stroke="#3b55d0"/><path d="M9 4.500v7" stroke="#c4ccf6" stroke-width="1" stroke-dasharray="1.300 0.900"/></svg></div>
<div class="lbl" style="left:99px;letter-spacing:0;"><span style="letter-spacing:-0.30px">section B-D, Romania</span></div></div>
<div class="a row" style="top:234px">
<div class="hdts" style="left:65px;top:9px;width:9px"></div>
<div class="a" style="left:76px;top:1px;line-height:0"><svg width="16" height="15" viewBox="0 0 16 15"><rect x=".5" y=".5" width="15" height="14" fill="#f5fafb" stroke="#8c9a9c"/><path d="M.5 14.500h15" stroke="#7c8a8c"/><rect x="2" y="2" width="12" height="10" fill="#d3dcdf"/><rect x="2" y="2" width="12" height="2" fill="#3bb2f7"/><rect x="2" y="2" width="3" height="10" fill="#3bb2f7"/><rect x="5.20" y="4.20" width="2.20" height="1.20" fill="#fff"/><rect x="8.20" y="4.20" width="2.20" height="1.20" fill="#fff"/><rect x="11.20" y="4.20" width="2.20" height="1.20" fill="#fff"/><rect x="5.20" y="6.20" width="2.20" height="1.20" fill="#fff"/><rect x="8.20" y="6.20" width="2.20" height="1.20" fill="#fff"/><rect x="11.20" y="6.20" width="2.20" height="1.20" fill="#fff"/><rect x="5.20" y="8.20" width="2.20" height="1.20" fill="#fff"/><rect x="8.20" y="8.20" width="2.20" height="1.20" fill="#fff"/><rect x="11.20" y="8.20" width="2.20" height="1.20" fill="#fff"/><rect x="5.20" y="10.20" width="2.20" height="1.20" fill="#fff"/><rect x="8.20" y="10.20" width="2.20" height="1.20" fill="#fff"/><rect x="11.20" y="10.20" width="2.20" height="1.20" fill="#fff"/><rect x="5.40" y="2.6" width="1.60" height="0.8" fill="#a6dcfc"/><rect x="8.40" y="2.6" width="1.60" height="0.8" fill="#a6dcfc"/><rect x="11.40" y="2.6" width="1.60" height="0.8" fill="#a6dcfc"/><rect x="3" y="4.30" width="1" height="0.8" fill="#b8e4fd"/><rect x="3" y="6.30" width="1" height="0.8" fill="#b8e4fd"/><rect x="3" y="8.30" width="1" height="0.8" fill="#b8e4fd"/><rect x="3" y="10.30" width="1" height="0.8" fill="#b8e4fd"/><rect x="7.500" y="2.500" width="3" height="10" fill="#8c9cec" stroke="#3b55d0"/><path d="M9 4.500v7" stroke="#c4ccf6" stroke-width="1" stroke-dasharray="1.300 0.900"/></svg></div>
<div class="lbl" style="left:99px;letter-spacing:0;"><span style="letter-spacing:-0.26px">section B-D, Slovenia</span></div></div>
<div class="a row" style="top:252px">
<div class="hdts" style="left:65px;top:9px;width:9px"></div>
<div class="a" style="left:76px;top:1px;line-height:0"><svg width="16" height="15" viewBox="0 0 16 15"><rect x=".5" y=".5" width="15" height="14" fill="#f5fafb" stroke="#8c9a9c"/><path d="M.5 14.500h15" stroke="#7c8a8c"/><rect x="2" y="2" width="12" height="10" fill="#d3dcdf"/><rect x="2" y="2" width="12" height="2" fill="#3bb2f7"/><rect x="2" y="2" width="3" height="10" fill="#3bb2f7"/><rect x="5.20" y="4.20" width="2.20" height="1.20" fill="#fff"/><rect x="8.20" y="4.20" width="2.20" height="1.20" fill="#fff"/><rect x="11.20" y="4.20" width="2.20" height="1.20" fill="#fff"/><rect x="5.20" y="6.20" width="2.20" height="1.20" fill="#fff"/><rect x="8.20" y="6.20" width="2.20" height="1.20" fill="#fff"/><rect x="11.20" y="6.20" width="2.20" height="1.20" fill="#fff"/><rect x="5.20" y="8.20" width="2.20" height="1.20" fill="#fff"/><rect x="8.20" y="8.20" width="2.20" height="1.20" fill="#fff"/><rect x="11.20" y="8.20" width="2.20" height="1.20" fill="#fff"/><rect x="5.20" y="10.20" width="2.20" height="1.20" fill="#fff"/><rect x="8.20" y="10.20" width="2.20" height="1.20" fill="#fff"/><rect x="11.20" y="10.20" width="2.20" height="1.20" fill="#fff"/><rect x="5.40" y="2.6" width="1.60" height="0.8" fill="#a6dcfc"/><rect x="8.40" y="2.6" width="1.60" height="0.8" fill="#a6dcfc"/><rect x="11.40" y="2.6" width="1.60" height="0.8" fill="#a6dcfc"/><rect x="3" y="4.30" width="1" height="0.8" fill="#b8e4fd"/><rect x="3" y="6.30" width="1" height="0.8" fill="#b8e4fd"/><rect x="3" y="8.30" width="1" height="0.8" fill="#b8e4fd"/><rect x="3" y="10.30" width="1" height="0.8" fill="#b8e4fd"/><rect x="7.500" y="2.500" width="3" height="10" fill="#8c9cec" stroke="#3b55d0"/><path d="M9 4.500v7" stroke="#c4ccf6" stroke-width="1" stroke-dasharray="1.300 0.900"/></svg></div>
<div class="lbl" style="left:99px;letter-spacing:0;"><span style="letter-spacing:-0.28px">section B-D, United Kingdom</span></div></div>
<div class="a row" style="top:270px">
<div class="exp plus" style="left:3px;top:5px"></div><div class="hdts" style="left:13px;top:9px;width:6px"></div>
<div class="a" style="left:21px;top:1px;line-height:0"><svg width="12" height="16" viewBox="0 0 12 16"><defs><linearGradient id="gdoc" x1="0" y1="0" x2="0" y2="1"><stop offset="0" stop-color="#e9f0f0"/><stop offset=".6" stop-color="#fbfdfd"/><stop offset="1" stop-color="#fff"/></linearGradient></defs><path d="M.5 .5 H8.500 L11.500 3.500 V15.500 H.5 Z" fill="url(#gdoc)" stroke="#90a0a2"/><path d="M8.500 .5 V3.500 H11.500 Z" fill="#fff" stroke="#90a0a2" stroke-linejoin="round"/><rect x="2" y="4" width="1" height="1" fill="#2c9a2c"/><rect x="4" y="4" width="3" height="1" fill="#c8d0d0"/><rect x="2" y="6" width="1" height="1" fill="#d24a4a"/><rect x="4" y="6" width="5" height="1" fill="#c8d0d0"/><rect x="2" y="8" width="1" height="1" fill="#3a78e0"/><rect x="4" y="8" width="5" height="1" fill="#c8d0d0"/><rect x="2" y="10" width="1" height="1" fill="#444"/><rect x="4" y="10" width="5" height="1" fill="#c8d0d0"/><rect x="2" y="12" width="1" height="1" fill="#3a78e0"/><rect x="4" y="12" width="4" height="1" fill="#c8d0d0"/></svg></div>
<div class="lbl" style="left:42px;letter-spacing:0;"><span style="letter-spacing:-0.34px">TSW files</span></div></div>
<div class="a row" style="top:288px">
<div class="exp plus" style="left:3px;top:5px"></div><div class="hdts" style="left:13px;top:9px;width:6px"></div>
<div class="a" style="left:21px;top:1px;line-height:0"><svg width="12" height="16" viewBox="0 0 12 16"><defs><linearGradient id="gdoc" x1="0" y1="0" x2="0" y2="1"><stop offset="0" stop-color="#e9f0f0"/><stop offset=".6" stop-color="#fbfdfd"/><stop offset="1" stop-color="#fff"/></linearGradient></defs><path d="M.5 .5 H8.500 L11.500 3.500 V15.500 H.5 Z" fill="url(#gdoc)" stroke="#90a0a2"/><path d="M8.500 .5 V3.500 H11.500 Z" fill="#fff" stroke="#90a0a2" stroke-linejoin="round"/><rect x="2" y="4" width="1" height="1" fill="#2c9a2c"/><rect x="4" y="4" width="3" height="1" fill="#c8d0d0"/><rect x="2" y="6" width="1" height="1" fill="#d24a4a"/><rect x="4" y="6" width="5" height="1" fill="#c8d0d0"/><rect x="2" y="8" width="1" height="1" fill="#3a78e0"/><rect x="4" y="8" width="5" height="1" fill="#c8d0d0"/><rect x="2" y="10" width="1" height="1" fill="#444"/><rect x="4" y="10" width="5" height="1" fill="#c8d0d0"/><rect x="2" y="12" width="1" height="1" fill="#3a78e0"/><rect x="4" y="12" width="4" height="1" fill="#c8d0d0"/></svg></div>
<div class="lbl" style="left:42px;letter-spacing:0;"><span style="letter-spacing:-0.00px">Txt files</span></div></div>
<div class="a row" style="top:306px">
<div class="exp plus" style="left:3px;top:5px"></div><div class="hdts" style="left:13px;top:9px;width:6px"></div>
<div class="a" style="left:21px;top:1px;line-height:0"><svg width="12" height="16" viewBox="0 0 12 16"><defs><linearGradient id="gdoc" x1="0" y1="0" x2="0" y2="1"><stop offset="0" stop-color="#e9f0f0"/><stop offset=".6" stop-color="#fbfdfd"/><stop offset="1" stop-color="#fff"/></linearGradient></defs><path d="M.5 .5 H8.500 L11.500 3.500 V15.500 H.5 Z" fill="url(#gdoc)" stroke="#90a0a2"/><path d="M8.500 .5 V3.500 H11.500 Z" fill="#fff" stroke="#90a0a2" stroke-linejoin="round"/></svg></div>
<div class="lbl" style="left:42px;letter-spacing:0;"><span style="letter-spacing:-0.70px">USCB</span></div></div>
<div class="a row" style="top:324px">
<div class="exp plus" style="left:3px;top:5px"></div><div class="hdts" style="left:13px;top:9px;width:6px"></div>
<div class="a" style="left:21px;top:1px;line-height:0"><svg width="12" height="16" viewBox="0 0 12 16"><defs><linearGradient id="gdoc" x1="0" y1="0" x2="0" y2="1"><stop offset="0" stop-color="#e9f0f0"/><stop offset=".6" stop-color="#fbfdfd"/><stop offset="1" stop-color="#fff"/></linearGradient></defs><path d="M.5 .5 H8.500 L11.500 3.500 V15.500 H.5 Z" fill="url(#gdoc)" stroke="#90a0a2"/><path d="M8.500 .5 V3.500 H11.500 Z" fill="#fff" stroke="#90a0a2" stroke-linejoin="round"/><path d="M4.500 7.500 L2.500 9.500 L4.500 11.500 M7.500 7.500 L9.500 9.500 L7.500 11.500" fill="none" stroke="#4a4a4a" stroke-width="1.100"/></svg></div>
<div class="lbl" style="left:42px;letter-spacing:0;"><span style="letter-spacing:-0.41px">Xml files</span></div></div>
</div>
<div class="a" style="left:5px;top:567px;width:294px;height:16px;background:#f0f0f0"></div>
<div class="a" style="left:23px;top:567px;width:204px;height:15px;border:1px solid #979797;border-radius:2px;background:linear-gradient(#f5f5f5,#e9e9e9 45%,#d9d9d9 50%,#cfcfcf);box-shadow:inset 0 0 0 1px rgba(255,255,255,.6)"></div>
<div class="a" style="left:121px;top:571px;width:8px;height:7px;background-image:linear-gradient(90deg,#3c3c3c 0,#3c3c3c 1px,#fff 1px,#fff 2px,transparent 2px);background-size:3px 7px"></div>
<svg class="a" style="left:11px;top:571px" width="4" height="7" viewBox="0 0 4 7"><path d="M4 0 L0 3.500 L4 7Z" fill="#000"/></svg>
<svg class="a" style="left:289px;top:571px" width="4" height="7" viewBox="0 0 4 7"><path d="M0 0 L4 3.500 L0 7Z" fill="#000"/></svg>
<div class="a" style="left:304px;top:87px;width:754px;height:497px;border:1px solid #878b97;background:#f0f0f0"></div>
<div class="a" style="left:304px;top:68px;width:56px;height:20px;border:1px solid #4a88c2;border-bottom:0;background:linear-gradient(#f6fafd 0,#f0f7fb 9px,#deedf6 9px,#d9eaf5 19px);box-shadow:inset 1px 1px 0 #fff,inset -1px 0 0 #fff"></div>
<div class="t" style="left:311px;top:73px;font-size:11px;letter-spacing:-0.3px">Grid</div>
<svg class="a" style="left:349px;top:75px" width="7" height="7" viewBox="0 0 7 7"><path d="M1.300 1.300 L5.700 5.700 M5.700 1.300 L1.300 5.700" stroke="#3a3a3a" stroke-width="2.500" stroke-linecap="round"/><path d="M1.400 1.400 L5.600 5.600 M5.600 1.400 L1.400 5.600" stroke="#e0e0e0" stroke-width=".9" stroke-linecap="round"/></svg>
<div class="a" style="left:988px;top:68px;width:30px;height:15px;border:1px solid #9aa0a6;border-radius:1px 1px 4px 4px;background:linear-gradient(#efefef 0,#e9e9e9 6px,#dcdcdc 6px,#d6d6d6 13px);box-shadow:inset 0 0 0 1px #fafafa"><div class="a" style="left:13px;top:0;width:1px;height:13px;background:#b4b8bc"></div><div class="a" style="left:14px;top:0;width:1px;height:13px;background:#fafafa"></div><svg class="a" style="left:4px;top:3px" width="4" height="7" viewBox="0 0 4 7"><path d="M4 0 L0 3.500 L4 7Z" fill="#a0a0a0"/></svg><svg class="a" style="left:20px;top:3px" width="4" height="7" viewBox="0 0 4 7"><path d="M0 0 L4 3.500 L0 7Z" fill="#a0a0a0"/></svg></div>
<div class="a" style="left:1021px;top:68px;width:16px;height:15px;border:1px solid #414d55;border-radius:1px 1px 4px 4px;background:linear-gradient(#efefef 0,#e9e9e9 6px,#dcdcdc 6px,#d6d6d6 13px);box-shadow:inset 0 0 0 1px #fafafa"><svg class="a" style="left:4px;top:5px" width="7" height="4" viewBox="0 0 7 4"><path d="M0 0 H7 L3.500 4Z" fill="#26323c"/></svg></div>
<div class="a" style="left:1041px;top:68px;width:16px;height:15px;border:1px solid #414d55;border-radius:1px 1px 4px 4px;background:linear-gradient(#efefef 0,#e9e9e9 6px,#dcdcdc 6px,#d6d6d6 13px);box-shadow:inset 0 0 0 1px #fafafa"><div class="a" style="left:3px;top:4px;width:8px;height:6px;border:1px solid #26323c;border-top-width:2px;background:#e6e6e6"></div></div>
<div class="a" style="left:530px;top:108px;width:511px;height:475px;background:#fff"></div>
<div class="a" style="left:1041px;top:108px;width:16px;height:475px;background:linear-gradient(90deg,#ececec,#f4f4f4 50%,#ececec)"></div>
<div class="a" style="left:1041px;top:126px;width:15px;height:52px;border:1px solid #979797;border-radius:2px;background:linear-gradient(90deg,#f5f5f5,#e9e9e9 45%,#d9d9d9 50%,#cfcfcf);box-shadow:inset 0 0 0 1px rgba(255,255,255,.6)"></div>
<div class="a" style="left:1045px;top:148px;width:7px;height:8px;background-image:linear-gradient(#3c3c3c 0,#3c3c3c 1px,#fff 1px,#fff 2px,transparent 2px);background-size:7px 3px"></div>
<svg class="a" style="left:1046px;top:115px" width="7" height="4" viewBox="0 0 7 4"><path d="M0 4 H7 L3.500 0Z" fill="#000"/></svg>
<svg class="a" style="left:1046px;top:573px" width="7" height="4" viewBox="0 0 7 4"><path d="M0 0 H7 L3.500 4Z" fill="#000"/></svg>
<div class="a" style="left:305px;top:88px;width:225px;height:495px;background:#f0f0f0;overflow:hidden">
<div class="a" style="left:0;top:0;width:75px;height:495px;background:#fff"></div>
<div class="gc" style="left:0;top:0;width:74px;height:19px;background:#f0f0f0"></div>
<div class="gc" style="left:75px;top:0;width:74px;height:19px;line-height:19px;background:#f0f0f0;text-align:center">Volume ind...</div>
<div class="gc" style="left:150px;top:0;width:74px;height:19px;line-height:19px;background:#3399ff;color:#fff;text-align:center">Volume ind...</div>
<div class="a" style="left:0;top:19px;width:225px;height:1px;background:#fff"></div>
<div class="gc" style="left:0;top:20px;width:74px;background:#f0f0f0;padding-right:4px">1-2000</div>
<div class="gc" style="left:75px;top:20px;width:74px;background:#fff;padding-right:5px">61,3</div>
<div class="gc" style="left:150px;top:20px;width:74px;background:#3399ff;color:#fff;padding-right:5px">119</div>
<div class="gc" style="left:0;top:39px;width:74px;background:#3399ff;color:#fff;padding-right:4px">2-2000</div>
<div class="gc" style="left:75px;top:39px;width:74px;background:#fff;padding-right:5px">58,3</div>
<div class="gc" style="left:150px;top:39px;width:74px;background:#5eadff;color:#fff;padding-right:5px">116</div>
<div class="gc" style="left:0;top:58px;width:74px;background:#f0f0f0;padding-right:4px">3-2000</div>
<div class="gc" style="left:75px;top:58px;width:74px;background:#fff;padding-right:5px">67,3</div>
<div class="gc" style="left:150px;top:58px;width:74px;background:#3399ff;color:#fff;padding-right:5px">121</div>
<div class="gc" style="left:0;top:77px;width:74px;background:#f0f0f0;padding-right:4px">4-2000</div>
<div class="gc" style="left:75px;top:77px;width:74px;background:#fff;padding-right:5px">54,8</div>
<div class="gc" style="left:150px;top:77px;width:74px;background:#3399ff;color:#fff;padding-right:6.5px">105,1</div>
<div class="gc" style="left:0;top:96px;width:74px;background:#f0f0f0;padding-right:4px">5-2000</div>
<div class="gc" style="left:75px;top:96px;width:74px;background:#fff;padding-right:5px">52,6</div>
<div class="gc" style="left:150px;top:96px;width:74px;background:#3399ff;color:#fff;padding-right:6.5px">122,1</div>
<div class="gc" style="left:0;top:115px;width:74px;background:#f0f0f0;padding-right:4px">6-2000</div>
<div class="gc" style="left:75px;top:115px;width:74px;background:#fff;padding-right:5px">57,3</div>
<div class="gc" style="left:150px;top:115px;width:74px;background:#3399ff;color:#fff;padding-right:6.5px">118,1</div>
<div class="gc" style="left:0;top:134px;width:74px;background:#f0f0f0;padding-right:4px">7-2000</div>
<div class="gc" style="left:75px;top:134px;width:74px;background:#fff;padding-right:5px">57,3</div>
<div class="gc" style="left:150px;top:134px;width:74px;background:#3399ff;color:#fff;padding-right:6.5px">119,1</div>
<div class="gc" style="left:0;top:153px;width:74px;background:#f0f0f0;padding-right:4px">8-2000</div>
<div class="gc" style="left:75px;top:153px;width:74px;background:#fff;padding-right:5px">60,6</div>
<div class="gc" style="left:150px;top:153px;width:74px;background:#3399ff;color:#fff;padding-right:5px">95</div>
<div class="gc" style="left:0;top:172px;width:74px;background:#f0f0f0;padding-right:4px">9-2000</div>
<div class="gc" style="left:75px;top:172px;width:74px;background:#fff;padding-right:5px">63,6</div>
<div class="gc" style="left:150px;top:172px;width:74px;background:#3399ff;color:#fff;padding-right:6.5px">123,1</div>
<div class="gc" style="left:0;top:191px;width:74px;background:#f0f0f0;padding-right:4px">10-2000</div>
<div class="gc" style="left:75px;top:191px;width:74px;background:#fff;padding-right:5px">55</div>
<div class="gc" style="left:150px;top:191px;width:74px;background:#3399ff;color:#fff;padding-right:6.5px">125,1</div>
<div class="gc" style="left:0;top:210px;width:74px;background:#f0f0f0;padding-right:4px">11-2000</div>
<div class="gc" style="left:75px;top:210px;width:74px;background:#fff;padding-right:5px">62,2</div>
<div class="gc" style="left:150px;top:210px;width:74px;background:#3399ff;color:#fff;padding-right:6.5px">125,1</div>
<div class="gc" style="left:0;top:229px;width:74px;background:#f0f0f0;padding-right:4px">12-2000</div>
<div class="gc" style="left:75px;top:229px;width:74px;background:#fff;padding-right:5px">66,7</div>
<div class="gc" style="left:150px;top:229px;width:74px;background:#3399ff;color:#fff;padding-right:6.5px">108,1</div>
<div class="gc" style="left:0;top:248px;width:74px;background:#f0f0f0;padding-right:4px">1-2001</div>
<div class="gc" style="left:75px;top:248px;width:74px;background:#fff;padding-right:5px">70,7</div>
<div class="gc" style="left:150px;top:248px;width:74px;background:#3399ff;color:#fff;padding-right:5px">121</div>
<div class="gc" style="left:0;top:267px;width:74px;background:#f0f0f0;padding-right:4px">2-2001</div>
<div class="gc" style="left:75px;top:267px;width:74px;background:#fff;padding-right:5px">66,9</div>
<div class="gc" style="left:150px;top:267px;width:74px;background:#3399ff;color:#fff;padding-right:6.5px">114,1</div>
<div class="gc" style="left:0;top:286px;width:74px;background:#f0f0f0;padding-right:4px">3-2001</div>
<div class="gc" style="left:75px;top:286px;width:74px;background:#fff;padding-right:5px">65,3</div>
<div class="gc" style="left:150px;top:286px;width:74px;background:#3399ff;color:#fff;padding-right:6.5px">129,1</div>
<div class="gc" style="left:0;top:305px;width:74px;background:#f0f0f0;padding-right:4px">4-2001</div>
<div class="gc" style="left:75px;top:305px;width:74px;background:#fff;padding-right:5px">59,9</div>
<div class="gc" style="left:150px;top:305px;width:74px;background:#3399ff;color:#fff;padding-right:6.5px">114,1</div>
<div class="gc" style="left:0;top:324px;width:74px;background:#f0f0f0;padding-right:4px">5-2001</div>
<div class="gc" style="left:75px;top:324px;width:74px;background:#fff;padding-right:5px">67,7</div>
<div class="gc" style="left:150px;top:324px;width:74px;background:#3399ff;color:#fff;padding-right:6.5px">125,1</div>
<div class="gc" style="left:0;top:343px;width:74px;background:#f0f0f0;padding-right:4px">6-2001</div>
<div class="gc" style="left:75px;top:343px;width:74px;background:#fff;padding-right:5px">65,5</div>
<div class="gc" style="left:150px;top:343px;width:74px;background:#3399ff;color:#fff;padding-right:6.5px">119,1</div>
<div class="gc" style="left:0;top:362px;width:74px;background:#f0f0f0;padding-right:4px">7-2001</div>
<div class="gc" style="left:75px;top:362px;width:74px;background:#fff;padding-right:5px">66,9</div>
<div class="gc" style="left:150px;top:362px;width:74px;background:#3399ff;color:#fff;padding-right:6.5px">123,1</div>
<div class="gc" style="left:0;top:381px;width:74px;background:#f0f0f0;padding-right:4px">8-2001</div>
<div class="gc" style="left:75px;top:381px;width:74px;background:#fff;padding-right:5px">62,4</div>
<div class="gc" style="left:150px;top:381px;width:74px;background:#3399ff;color:#fff;padding-right:6.5px">89,1</div>
<div class="gc" style="left:0;top:400px;width:74px;background:#f0f0f0;padding-right:4px">9-2001</div>
<div class="gc" style="left:75px;top:400px;width:74px;background:#fff;padding-right:5px">62,3</div>
<div class="gc" style="left:150px;top:400px;width:74px;background:#3399ff;color:#fff;padding-right:6.5px">118,1</div>
<div class="gc" style="left:0;top:419px;width:74px;background:#f0f0f0;padding-right:4px">10-2001</div>
<div class="gc" style="left:75px;top:419px;width:74px;background:#fff;padding-right:5px">72,3</div>
<div class="gc" style="left:150px;top:419px;width:74px;background:#3399ff;color:#fff;padding-right:6.5px">127,1</div>
<div class="gc" style="left:0;top:438px;width:74px;background:#f0f0f0;padding-right:4px">11-2001</div>
<div class="gc" style="left:75px;top:438px;width:74px;background:#fff;padding-right:5px">75,2</div>
<div class="gc" style="left:150px;top:438px;width:74px;background:#3399ff;color:#fff;padding-right:6.5px">126,1</div>
<div class="gc" style="left:0;top:457px;width:74px;background:#f0f0f0;padding-right:4px">12-2001</div>
<div class="gc" style="left:75px;top:457px;width:74px;background:#fff;padding-right:5px">76,2</div>
<div class="gc" style="left:150px;top:457px;width:74px;background:#3399ff;color:#fff;padding-right:5px">101</div>
<div class="gc" style="left:0;top:476px;width:74px;background:#f0f0f0;padding-right:4px">1-2002</div>
<div class="gc" style="left:75px;top:476px;width:74px;background:#fff;padding-right:5px">67,1</div>
<div class="gc" style="left:150px;top:476px;width:74px;background:#3399ff;color:#fff;padding-right:6.5px">122,1</div>
</div>
<div class="a" style="left:515px;top:135px;width:199px;height:457px;border:3px solid #ed1c24;background:#f0f0f0"></div>
<div class="a" style="left:544px;top:140px;width:2px;height:449px;border-left:1px solid #e0e0e0;border-right:1px solid #fff"></div>
<div class="mi" style="top:141px;letter-spacing:0;font-weight:bold;"><span style="letter-spacing:-0.22px">Open</span></div>
<div class="acc" style="top:141px;letter-spacing:0;"><span style="letter-spacing:-0.40px">Enter</span></div>
<div class="mi" style="top:163px;letter-spacing:0;"><span style="letter-spacing:0.04px">Open with</span></div>
<svg class="a" style="left:703px;top:169px" width="4" height="7" viewBox="0 0 4 7"><path d="M0 0 L4 3.500 L0 7Z" fill="#000"/></svg>
<div class="mi" style="top:185px;letter-spacing:0;"><span style="letter-spacing:-0.70px">Save</span></div>
<svg class="a" style="left:703px;top:191px" width="4" height="7" viewBox="0 0 4 7"><path d="M0 0 L4 3.500 L0 7Z" fill="#000"/></svg>
<div class="mi" style="top:207px;letter-spacing:0;"><span style="letter-spacing:-0.41px">Rename</span></div>
<div class="mi" style="top:229px;letter-spacing:0;"><span style="letter-spacing:-0.70px">Freeze</span></div>
<div class="mi" style="top:251px;letter-spacing:0;"><span style="letter-spacing:0.02px">Copy</span></div>
<div class="acc" style="top:251px;letter-spacing:0;"><span style="letter-spacing:0.01px">Ctrl+C</span></div>
<div class="mi" style="top:273px;letter-spacing:0;color:#6d6d6d;"><span style="letter-spacing:-0.52px">Paste</span></div>
<div class="acc" style="top:273px;letter-spacing:0;color:#6d6d6d;"><span style="letter-spacing:-0.08px">Ctrl+V</span></div>
<div class="mi" style="top:295px;letter-spacing:0;"><span style="letter-spacing:-0.35px">Remove</span></div>
<div class="acc" style="top:295px;letter-spacing:0;"><span style="letter-spacing:-0.36px">Delete</span></div>
<div class="sep" style="top:321px"></div>
<div class="mi" style="top:327px;letter-spacing:0;"><span style="letter-spacing:-0.19px">Select all</span></div>
<div class="acc" style="top:327px;letter-spacing:0;"><span style="letter-spacing:0.24px">Ctrl+A</span></div>
<div class="sep" style="top:353px"></div>
<div class="mi" style="top:359px;letter-spacing:0;"><span style="letter-spacing:-0.24px">Transpose</span></div>
<div class="mi" style="top:381px;letter-spacing:0;"><span style="letter-spacing:-0.16px">Reverse chronology</span></div>
<div class="mi" style="top:403px;letter-spacing:0;"><span style="letter-spacing:-0.22px">Single time series</span></div>
<div class="mi" style="top:425px;letter-spacing:0;"><span style="letter-spacing:-0.38px">Clear</span></div>
<div class="acc" style="top:425px;letter-spacing:0;"><span style="letter-spacing:-0.06px">Ctrl+L</span></div>
<div class="sep" style="top:451px"></div>
<div class="mi" style="top:457px;letter-spacing:0;"><span style="letter-spacing:-0.02px">Edit format...</span></div>
<div class="mi" style="top:479px;letter-spacing:0;"><span style="letter-spacing:-0.20px">Use color scheme</span></div>
<div class="mi" style="top:501px;letter-spacing:0;"><span style="letter-spacing:-0.14px">Color scheme</span></div>
<svg class="a" style="left:703px;top:507px" width="4" height="7" viewBox="0 0 4 7"><path d="M0 0 L4 3.500 L0 7Z" fill="#000"/></svg>
<div class="mi" style="top:523px;letter-spacing:0;"><span style="letter-spacing:-0.34px">Show bars</span></div>
<div class="mi" style="top:545px;letter-spacing:0;"><span style="letter-spacing:-0.20px">Show crosshair</span></div>
<div class="mi" style="top:567px;letter-spacing:0;"><span style="letter-spacing:0.23px">Zoom</span></div>
<svg class="a" style="left:703px;top:573px" width="4" height="7" viewBox="0 0 4 7"><path d="M0 0 L4 3.500 L0 7Z" fill="#000"/></svg>
<svg class="a" style="left:1034px;top:588px" width="18" height="18" viewBox="0 0 18 18"><circle cx="8.700" cy="8.700" r="8.600" fill="#0f9d12"/><path d="M4.200 8.800 L7.600 12.200 L13.300 6.200" fill="none" stroke="#fff" stroke-width="2.800"/></svg>
<div class="a" id="frame-t"></div><div class="a" id="frame-l"></div><div class="a" id="frame-r"></div><div class="a" id="frame-r2"></div><div class="a" id="frame-b"></div><div class="a" id="frame-b2"></div>
</body></html>
